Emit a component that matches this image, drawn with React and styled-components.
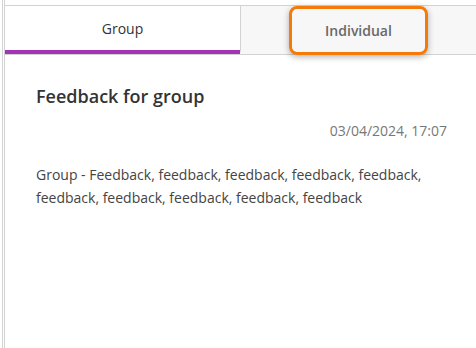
import React from 'react';
import styled, {createGlobalStyle} from 'styled-components';

const Global = createGlobalStyle`
html, body {
  margin: 0;
  padding: 0;
  background: #ffffff;
  font-family: "Open Sans", "Liberation Sans", sans-serif;
}
`;

const Page = styled.div`
height: 348px;
padding-left: 2px;
box-sizing: border-box;
overflow: hidden;
`;

const Rail = styled.div`
height: 100%;
border-left: 1px solid #d2d2d2;
padding-left: 1px;
`;

const Panel = styled.div`
height: 100%;
border-left: 1px solid #d2d2d2;
padding-top: 5px;
box-sizing: border-box;
`;

const TabList = styled.div`
display: flex;
border-top: 1px solid #d2d2d2;
border-bottom: 1px solid #d2d2d2;
`;

const Tab = styled.button`
flex: 1;
height: 48px;
display: flex;
align-items: center;
justify-content: center;
border: none;
border-bottom: 4px solid ${({active}) => active ? '#a334b5' : 'transparent'};
border-left: ${({divider}) => divider ? '1px solid #d2d2d2' : 'none'};
background: ${({active}) => active ? '#ffffff' : '#f7f7f7'};
color: ${({active}) => active ? '#333333' : '#686868'};
font-family: "Open Sans", "Liberation Sans", sans-serif;
font-size: 14px;
font-weight: ${({active}) => active ? 400 : 600};
padding: 0;
cursor: pointer;
`;

const TabLabel = styled.span`
display: flex;
align-items: center;
justify-content: center;
box-sizing: border-box;
height: ${({focused}) => focused ? '49px' : 'auto'};
margin-bottom: ${({focused}) => focused ? '-4px' : '0'};
padding: ${({focused}) => focused ? '0 33px' : '0'};
border: ${({focused}) => focused ? '3px solid #f57a0a' : 'none'};
border-radius: 8px;
box-shadow: ${({focused}) => focused ? '0 2px 6px rgba(0,0,0,0.3)' : 'none'};
`;

const Content = styled.div`
padding: 29px 29px 0 31px;
`;

const Title = styled.h2`
margin: 0;
font-size: 18px;
font-weight: 600;
color: #333333;
line-height: 24px;
`;

const Stamp = styled.div`
margin-top: 13px;
text-align: right;
font-size: 14px;
color: #777777;
line-height: 19px;
`;

const Body = styled.p`
margin: 23px 0 0;
font-size: 14px;
line-height: 23px;
color: #444444;
`;

const App = () => {
    return (
        <Page>
            <Global/>
            <Rail>
                <Panel>
                    <TabList>
                        <Tab active>Group</Tab>
                        <Tab divider>
                            <TabLabel focused>Individual</TabLabel>
                        </Tab>
                    </TabList>
                    <Content>
                        <Title>Feedback for group</Title>
                        <Stamp>03/04/2024, 17:07</Stamp>
                        <Body>
                            Group - Feedback, feedback, feedback, feedback, feedback, feedback, feedback, feedback, feedback, feedback
                        </Body>
                    </Content>
                </Panel>
            </Rail>
        </Page>
    );
};

export default App;
